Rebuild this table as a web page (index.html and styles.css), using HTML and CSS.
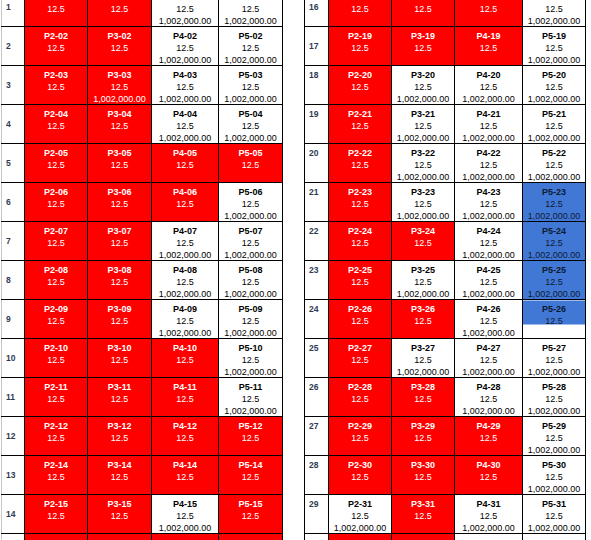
FILE: index.html
```html
<!DOCTYPE html>
<html>
<head>
<meta charset="utf-8">
<link rel="stylesheet" href="styles.css">
</head>
<body>
<div class="sheet">
<table class="grid left">
<colgroup><col class="k0"><col class="k1"><col class="k2"><col class="k3"><col class="k4"></colgroup>
<tr><td class="h">1</td><td class="r"><span class="n">P2-01</span><span>12.5</span></td><td class="r"><span class="n">P3-01</span><span>12.5</span></td><td><span class="n">P4-01</span><span>12.5</span><span>1,002,000.00</span></td><td><span class="n">P5-01</span><span>12.5</span><span>1,002,000.00</span></td></tr>
<tr><td class="h">2</td><td class="r"><span class="n">P2-02</span><span>12.5</span></td><td class="r"><span class="n">P3-02</span><span>12.5</span></td><td><span class="n">P4-02</span><span>12.5</span><span>1,002,000.00</span></td><td><span class="n">P5-02</span><span>12.5</span><span>1,002,000.00</span></td></tr>
<tr><td class="h">3</td><td class="r"><span class="n">P2-03</span><span>12.5</span></td><td class="r"><span class="n">P3-03</span><span>12.5</span><span>1,002,000.00</span></td><td><span class="n">P4-03</span><span>12.5</span><span>1,002,000.00</span></td><td><span class="n">P5-03</span><span>12.5</span><span>1,002,000.00</span></td></tr>
<tr><td class="h">4</td><td class="r"><span class="n">P2-04</span><span>12.5</span></td><td class="r"><span class="n">P3-04</span><span>12.5</span></td><td><span class="n">P4-04</span><span>12.5</span><span>1,002,000.00</span></td><td><span class="n">P5-04</span><span>12.5</span><span>1,002,000.00</span></td></tr>
<tr><td class="h">5</td><td class="r"><span class="n">P2-05</span><span>12.5</span></td><td class="r"><span class="n">P3-05</span><span>12.5</span></td><td class="r"><span class="n">P4-05</span><span>12.5</span></td><td class="r"><span class="n">P5-05</span><span>12.5</span></td></tr>
<tr><td class="h">6</td><td class="r"><span class="n">P2-06</span><span>12.5</span></td><td class="r"><span class="n">P3-06</span><span>12.5</span></td><td class="r"><span class="n">P4-06</span><span>12.5</span></td><td><span class="n">P5-06</span><span>12.5</span><span>1,002,000.00</span></td></tr>
<tr><td class="h">7</td><td class="r"><span class="n">P2-07</span><span>12.5</span></td><td class="r"><span class="n">P3-07</span><span>12.5</span></td><td><span class="n">P4-07</span><span>12.5</span><span>1,002,000.00</span></td><td><span class="n">P5-07</span><span>12.5</span><span>1,002,000.00</span></td></tr>
<tr><td class="h">8</td><td class="r"><span class="n">P2-08</span><span>12.5</span></td><td class="r"><span class="n">P3-08</span><span>12.5</span></td><td><span class="n">P4-08</span><span>12.5</span><span>1,002,000.00</span></td><td><span class="n">P5-08</span><span>12.5</span><span>1,002,000.00</span></td></tr>
<tr><td class="h">9</td><td class="r"><span class="n">P2-09</span><span>12.5</span></td><td class="r"><span class="n">P3-09</span><span>12.5</span></td><td><span class="n">P4-09</span><span>12.5</span><span>1,002,000.00</span></td><td><span class="n">P5-09</span><span>12.5</span><span>1,002,000.00</span></td></tr>
<tr><td class="h">10</td><td class="r"><span class="n">P2-10</span><span>12.5</span></td><td class="r"><span class="n">P3-10</span><span>12.5</span></td><td class="r"><span class="n">P4-10</span><span>12.5</span></td><td><span class="n">P5-10</span><span>12.5</span><span>1,002,000.00</span></td></tr>
<tr><td class="h">11</td><td class="r"><span class="n">P2-11</span><span>12.5</span></td><td class="r"><span class="n">P3-11</span><span>12.5</span></td><td class="r"><span class="n">P4-11</span><span>12.5</span></td><td><span class="n">P5-11</span><span>12.5</span><span>1,002,000.00</span></td></tr>
<tr><td class="h">12</td><td class="r"><span class="n">P2-12</span><span>12.5</span></td><td class="r"><span class="n">P3-12</span><span>12.5</span></td><td class="r"><span class="n">P4-12</span><span>12.5</span></td><td class="r"><span class="n">P5-12</span><span>12.5</span></td></tr>
<tr><td class="h">13</td><td class="r"><span class="n">P2-14</span><span>12.5</span></td><td class="r"><span class="n">P3-14</span><span>12.5</span></td><td class="r"><span class="n">P4-14</span><span>12.5</span></td><td class="r"><span class="n">P5-14</span><span>12.5</span></td></tr>
<tr><td class="h">14</td><td class="r"><span class="n">P2-15</span><span>12.5</span></td><td class="r"><span class="n">P3-15</span><span>12.5</span></td><td><span class="n">P4-15</span><span>12.5</span><span>1,002,000.00</span></td><td class="r"><span class="n">P5-15</span><span>12.5</span></td></tr>
<tr><td class="h">15</td><td class="r"><span class="n">P2-16</span><span>12.5</span></td><td class="r"><span class="n">P3-16</span><span>12.5</span></td><td class="r"><span class="n">P4-16</span><span>12.5</span></td><td class="r"><span class="n">P5-16</span><span>12.5</span></td></tr>
</table>

<table class="grid right">
<colgroup><col class="m0"><col class="m1"><col class="m2"><col class="m3"><col class="m4"></colgroup>
<tr><td class="h">16</td><td class="r"><span class="n">P2-18</span><span>12.5</span></td><td class="r"><span class="n">P3-18</span><span>12.5</span></td><td class="r"><span class="n">P4-18</span><span>12.5</span></td><td><span class="n">P5-18</span><span>12.5</span><span>1,002,000.00</span></td></tr>
<tr><td class="h">17</td><td class="r"><span class="n">P2-19</span><span>12.5</span></td><td class="r"><span class="n">P3-19</span><span>12.5</span></td><td class="r"><span class="n">P4-19</span><span>12.5</span></td><td><span class="n">P5-19</span><span>12.5</span><span>1,002,000.00</span></td></tr>
<tr><td class="ht">18</td><td class="r"><span class="n">P2-20</span><span>12.5</span></td><td><span class="n">P3-20</span><span>12.5</span><span>1,002,000.00</span></td><td><span class="n">P4-20</span><span>12.5</span><span>1,002,000.00</span></td><td><span class="n">P5-20</span><span>12.5</span><span>1,002,000.00</span></td></tr>
<tr><td class="ht">19</td><td class="r"><span class="n">P2-21</span><span>12.5</span></td><td><span class="n">P3-21</span><span>12.5</span><span>1,002,000.00</span></td><td><span class="n">P4-21</span><span>12.5</span><span>1,002,000.00</span></td><td><span class="n">P5-21</span><span>12.5</span><span>1,002,000.00</span></td></tr>
<tr><td class="ht">20</td><td class="r"><span class="n">P2-22</span><span>12.5</span></td><td><span class="n">P3-22</span><span>12.5</span><span>1,002,000.00</span></td><td><span class="n">P4-22</span><span>12.5</span><span>1,002,000.00</span></td><td><span class="n">P5-22</span><span>12.5</span><span>1,002,000.00</span></td></tr>
<tr><td class="ht">21</td><td class="r"><span class="n">P2-23</span><span>12.5</span></td><td><span class="n">P3-23</span><span>12.5</span><span>1,002,000.00</span></td><td><span class="n">P4-23</span><span>12.5</span><span>1,002,000.00</span></td><td class="bl"><span class="n">P5-23</span><span>12.5</span><span>1,002,000.00</span></td></tr>
<tr><td class="ht">22</td><td class="r"><span class="n">P2-24</span><span>12.5</span></td><td class="r"><span class="n">P3-24</span><span>12.5</span></td><td><span class="n">P4-24</span><span>12.5</span><span>1,002,000.00</span></td><td class="bl"><span class="n">P5-24</span><span>12.5</span><span>1,002,000.00</span></td></tr>
<tr><td class="ht">23</td><td class="r"><span class="n">P2-25</span><span>12.5</span></td><td><span class="n">P3-25</span><span>12.5</span><span>1,002,000.00</span></td><td><span class="n">P4-25</span><span>12.5</span><span>1,002,000.00</span></td><td class="bl"><span class="n">P5-25</span><span>12.5</span><span>1,002,000.00</span></td></tr>
<tr><td class="ht">24</td><td class="r"><span class="n">P2-26</span><span>12.5</span></td><td class="r"><span class="n">P3-26</span><span>12.5</span></td><td><span class="n">P4-26</span><span>12.5</span><span>1,002,000.00</span></td><td class="bp"><span class="n">P5-26</span><span>12.5</span></td></tr>
<tr><td class="ht">25</td><td class="r"><span class="n">P2-27</span><span>12.5</span></td><td><span class="n">P3-27</span><span>12.5</span><span>1,002,000.00</span></td><td><span class="n">P4-27</span><span>12.5</span><span>1,002,000.00</span></td><td><span class="n">P5-27</span><span>12.5</span><span>1,002,000.00</span></td></tr>
<tr><td class="ht">26</td><td class="r"><span class="n">P2-28</span><span>12.5</span></td><td class="r"><span class="n">P3-28</span><span>12.5</span></td><td><span class="n">P4-28</span><span>12.5</span><span>1,002,000.00</span></td><td><span class="n">P5-28</span><span>12.5</span><span>1,002,000.00</span></td></tr>
<tr><td class="ht">27</td><td class="r"><span class="n">P2-29</span><span>12.5</span></td><td class="r"><span class="n">P3-29</span><span>12.5</span></td><td class="r"><span class="n">P4-29</span><span>12.5</span></td><td><span class="n">P5-29</span><span>12.5</span><span>1,002,000.00</span></td></tr>
<tr><td class="ht">28</td><td class="r"><span class="n">P2-30</span><span>12.5</span></td><td class="r"><span class="n">P3-30</span><span>12.5</span></td><td class="r"><span class="n">P4-30</span><span>12.5</span></td><td><span class="n">P5-30</span><span>12.5</span><span>1,002,000.00</span></td></tr>
<tr><td class="ht">29</td><td><span class="n">P2-31</span><span>12.5</span><span>1,002,000.00</span></td><td class="r"><span class="n">P3-31</span><span>12.5</span></td><td><span class="n">P4-31</span><span>12.5</span><span>1,002,000.00</span></td><td><span class="n">P5-31</span><span>12.5</span><span>1,002,000.00</span></td></tr>
<tr><td class="ht">30</td><td class="r"><span class="n">P2-32</span><span>12.5</span></td><td class="r"><span class="n">P3-32</span><span>12.5</span></td><td><span class="n">P4-32</span><span>12.5</span><span>1,002,000.00</span></td><td><span class="n">P5-32</span><span>12.5</span><span>1,002,000.00</span></td></tr>
</table>
</div>
</body>
</html>
```

FILE: styles.css
```css
html, body {
  margin: 0;
  padding: 0;
  background: #ffffff;
  overflow: hidden;
}

.sheet {
  display: flex;
  align-items: flex-start;
  gap: 21px;
  margin-top: -13px;
  font-family: "Liberation Sans", Arial, sans-serif;
  font-size: 9px;
  color: #000000;
}

.grid {
  border-collapse: collapse;
  table-layout: fixed;
  flex: none;
}

.left {
  width: 281px;
  margin-left: 1px;
}

.right {
  width: 281px;
}

.k0 { width: 23px; }
.k1 { width: 63px; }
.k2 { width: 64px; }
.k3 { width: 67px; }
.k4 { width: 64px; }

.m0 { width: 24px; }
.m1 { width: 63px; }
.m2 { width: 63px; }
.m3 { width: 68px; }
.m4 { width: 63px; }

.grid tr {
  height: 39px;
}

.grid td {
  border: 1px solid #000000;
  padding: 2.5px 0 0 0;
  vertical-align: top;
  text-align: center;
  line-height: 12.5px;
  background: #ffffff;
  overflow: hidden;
  white-space: nowrap;
}

.grid td span {
  display: block;
}

.grid td span:nth-child(3) {
  line-height: 10.5px;
}

.grid td .n {
  font-weight: bold;
}

.left td.h {
  border-left-color: #c8c8c8;
}

.grid td.h,
.grid td.ht {
  text-align: left;
  padding: 0 0 0 4px;
  font-weight: bold;
  font-size: 8.5px;
  color: #2f3a52;
}

.grid td.h {
  vertical-align: middle;
}

.grid td.ht {
  vertical-align: top;
  padding-top: 2.5px;
}

.grid td.r {
  background: #ff0000;
  color: #ffffff;
}

.grid td.bl {
  background: #4178d6;
  color: #0d1a33;
}

.grid td.bp {
  background: linear-gradient(#4178d6 0, #4178d6 24px, #ffffff 24px);
  color: #0d1a33;
}
```
